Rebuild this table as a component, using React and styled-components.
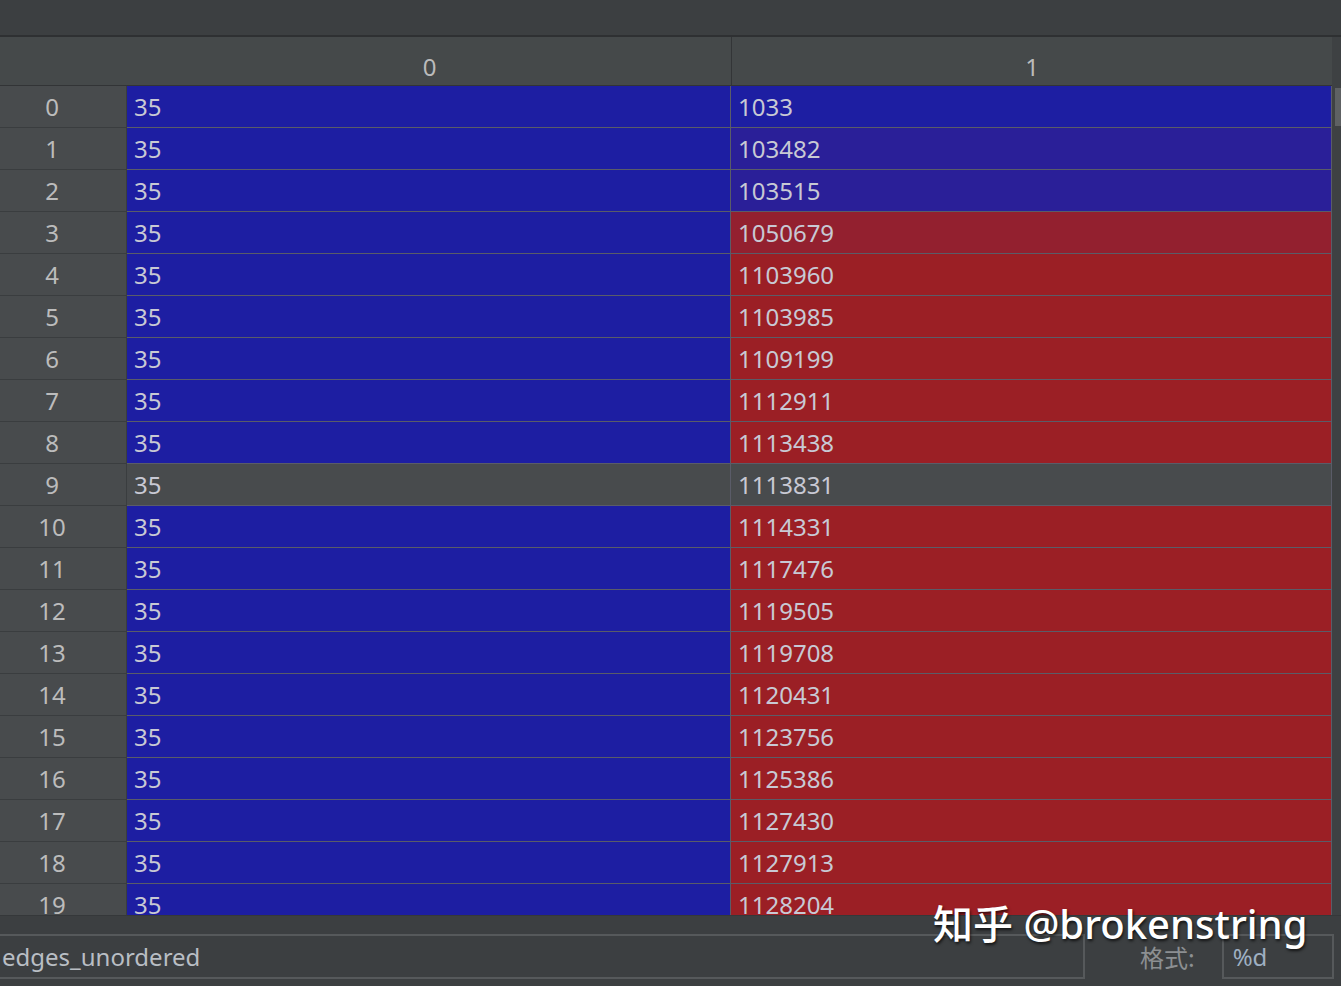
import React from "react";
import styled, { createGlobalStyle } from "styled-components";

const rows = [
    { v: "1033", c1: "blue" },
    { v: "103482", c1: "violet" },
    { v: "103515", c1: "violet" },
    { v: "1050679", c1: "wine" },
    { v: "1103960", c1: "red" },
    { v: "1103985", c1: "red" },
    { v: "1109199", c1: "red" },
    { v: "1112911", c1: "red" },
    { v: "1113438", c1: "red" },
    { v: "1113831", c1: "none", c0: "none" },
    { v: "1114331", c1: "red" },
    { v: "1117476", c1: "red" },
    { v: "1119505", c1: "red" },
    { v: "1119708", c1: "red" },
    { v: "1120431", c1: "red" },
    { v: "1123756", c1: "red" },
    { v: "1125386", c1: "red" },
    { v: "1127430", c1: "red" },
    { v: "1127913", c1: "red" },
    { v: "1128204", c1: "red" },
]

const colors = {
    blue: "#1d1ea2",
    violet: "#2a1f98",
    wine: "#93202f",
    red: "#9b1f25",
    none: "#484b4d",
}

const App = () => {
    return(
        <>
            <GlobalStyle/>
            <Window>
                <TopBar/>
                <TableArea>
                    <Grid>
                        <HeaderRow>
                            <HeaderCorner/>
                            <HeaderCell width={604}>0</HeaderCell>
                            <HeaderCell width={601} divider>1</HeaderCell>
                        </HeaderRow>
                        {rows.map((r, i) =>
                            <Row key={i}>
                                <IndexCell>{i}</IndexCell>
                                <Cell width={604} bg={colors[r.c0 || "blue"]}>35</Cell>
                                <Cell width={601} bg={colors[r.c1]}>{r.v}</Cell>
                            </Row>
                        )}
                    </Grid>
                    <ScrollTrack>
                        <ScrollThumb/>
                    </ScrollTrack>
                </TableArea>
                <Footer>
                    <NameField>edges_unordered</NameField>
                    <FormatLabel>格式:</FormatLabel>
                    <FormatField>%d</FormatField>
                </Footer>
                <Watermark>知乎 @brokenstring</Watermark>
            </Window>
        </>
    )
}

const GlobalStyle = createGlobalStyle`
    html, body {
        margin: 0;
        padding: 0;
        background-color: #3c3f41;
        overflow: hidden;
    }
`

const Window = styled.div`
    position: relative;
    width: 1341px;
    height: 986px;
    display: flex;
    flex-direction: column;
    background-color: #3c3f41;
    font-family: "Noto Sans", "Noto Sans CJK SC", sans-serif;
    overflow: hidden;
`

const TopBar = styled.div`
    height: 35px;
    flex: none;
    background-color: #3c3f41;
    border-bottom: 2px solid #2e3032;
`

const TableArea = styled.div`
    height: 878px;
    flex: none;
    display: flex;
    overflow: hidden;
    background-color: #45494a;
`

const Grid = styled.div`
    display: flex;
    flex-direction: column;
    width: 1332px;
    flex: none;
`

const HeaderRow = styled.div`
    display: flex;
    height: 48px;
    flex: none;
    background-color: #45494a;
    border-bottom: 1px solid #323436;
`

const HeaderCorner = styled.div`
    width: 127px;
    flex: none;
`

const HeaderCell = styled.div`
    width: ${props => props.width}px;
    flex: none;
    display: flex;
    align-items: center;
    justify-content: center;
    padding-top: 10px;
    box-sizing: border-box;
    border-left: 1px solid ${props => props.divider ? "#333537" : "transparent"};
    color: #bbbbbb;
    font-size: 24px;
`

const Row = styled.div`
    display: flex;
    height: 42px;
    flex: none;
`

const IndexCell = styled.div`
    width: 127px;
    flex: none;
    box-sizing: border-box;
    padding-right: 22px;
    display: flex;
    align-items: center;
    justify-content: center;
    background-color: #484b4d;
    border-right: 1px solid #3a3d3f;
    border-bottom: 1px solid #3a3d3f;
    color: #bcbcbc;
    font-size: 24px;
`

const Cell = styled.div`
    width: ${props => props.width}px;
    flex: none;
    box-sizing: border-box;
    display: flex;
    align-items: center;
    padding-left: 7px;
    background-color: ${props => props.bg};
    border-right: 1px solid #5a5c68;
    border-bottom: 1px solid #5a5c68;
    color: #c8c9d4;
    font-size: 24px;
`

const ScrollTrack = styled.div`
    flex: 1;
    background-color: #3e4143;
    padding-top: 51px;
    display: flex;
    flex-direction: column;
    align-items: flex-end;
`

const ScrollThumb = styled.div`
    width: 6px;
    height: 38px;
    background-color: #5e6163;
`

const Footer = styled.div`
    flex: 1;
    display: flex;
    align-items: flex-start;
    padding-top: 18px;
    background-color: #3c3f41;
    border-top: 1px solid #35383a;
`

const NameField = styled.div`
    width: 1088px;
    height: 45px;
    margin-left: -3px;
    flex: none;
    box-sizing: border-box;
    display: flex;
    align-items: center;
    padding-left: 3px;
    border: 2px solid #56595b;
    color: #b9bec4;
    font-size: 24px;
`

const FormatLabel = styled.div`
    margin-left: 55px;
    height: 45px;
    display: flex;
    align-items: center;
    color: #8c8f92;
    font-size: 24px;
    font-family: "Noto Sans CJK SC", sans-serif;
`

const FormatField = styled.div`
    margin-left: 27px;
    width: 112px;
    height: 45px;
    flex: none;
    box-sizing: border-box;
    display: flex;
    align-items: center;
    padding-left: 9px;
    border: 2px solid #56595b;
    color: #9fb0c2;
    font-size: 24px;
`

const Watermark = styled.div`
    position: absolute;
    left: 933px;
    top: 893px;
    color: #ffffff;
    font-size: 40px;
    font-weight: 500;
    font-family: "Noto Sans", "Noto Sans CJK SC", sans-serif;
    text-shadow: 1px 2px 3px rgba(0, 0, 0, 0.7);
    white-space: nowrap;
`

export default App
